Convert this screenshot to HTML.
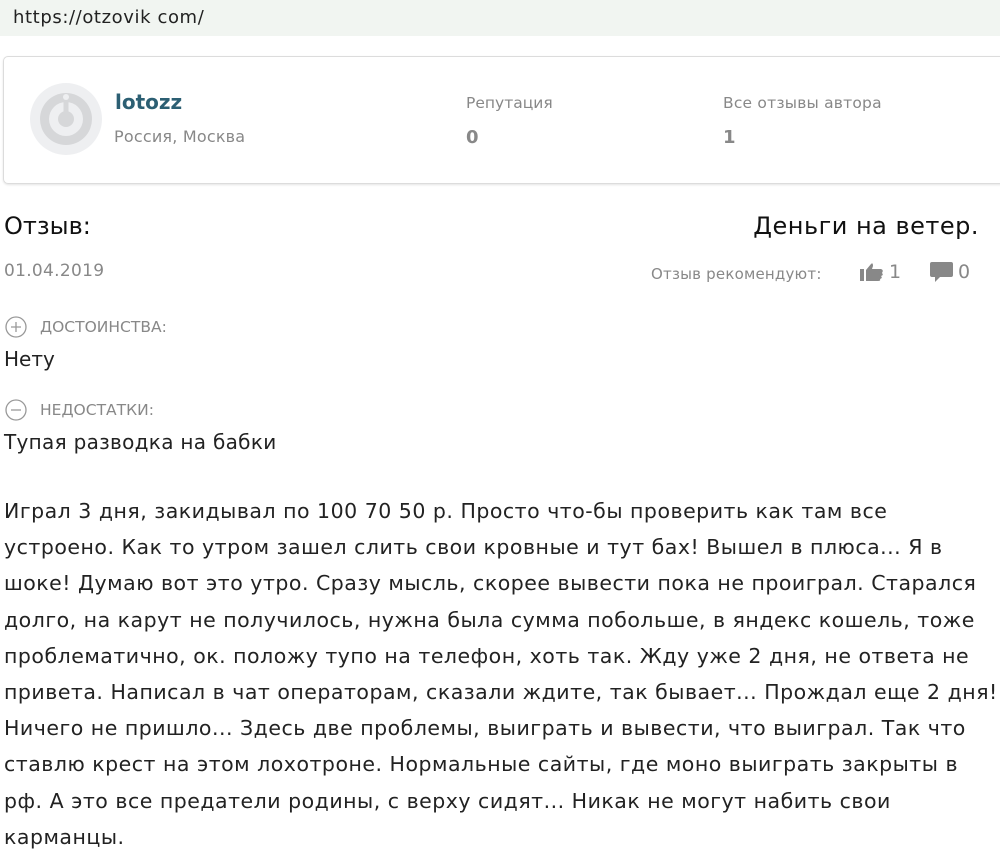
<!DOCTYPE html>
<html><head><meta charset="utf-8"><style>
body{margin:0;width:1000px;height:844px;overflow:hidden;background:#fff;font-family:"DejaVu Sans","Liberation Sans",sans-serif;color:#222;position:relative}
.a{position:absolute;white-space:nowrap}
</style></head><body>
<div class="a" style="left:0;top:0;width:1000px;height:36px;background:#f1f5f1"></div>
<div class="a" style="left:13px;top:7px;font-size:18px;letter-spacing:0.6px;color:#222">https://otzovik com/</div>
<div class="a" style="left:3px;top:56px;width:1010px;height:126px;border:1px solid #dcdcdc;border-radius:5px;box-shadow:0 1px 2px #e4e4e4"></div>
<svg class="a" style="left:30px;top:83px" width="72" height="72"><circle cx="36" cy="36" r="36" fill="#eeeff1"/><circle cx="36" cy="36" r="26" fill="#d6d7d9"/><circle cx="36" cy="36" r="17" fill="#eeeff1"/><circle cx="36" cy="36" r="8" fill="#d6d7d9"/><rect x="33.5" y="14" width="5" height="22" fill="#d6d7d9"/><circle cx="36" cy="14" r="3" fill="#eeeff1"/></svg>
<div class="a" style="left:115px;top:90px;font-size:20px;font-weight:bold;color:#2c5f73">lotozz</div>
<div class="a" style="left:114px;top:127px;font-size:16px;letter-spacing:0.2px;color:#888">Россия, Москва</div>
<div class="a" style="left:466px;top:94px;font-size:15.5px;color:#888">Репутация</div>
<div class="a" style="left:466px;top:127px;font-size:18px;font-weight:bold;color:#888">0</div>
<div class="a" style="left:723px;top:94px;font-size:15.5px;letter-spacing:0.2px;color:#888">Все отзывы автора</div>
<div class="a" style="left:723px;top:127px;font-size:18px;font-weight:bold;color:#888">1</div>
<div class="a" style="left:4px;top:212px;font-size:24px;color:#111">Отзыв:</div>
<div class="a" style="right:21px;top:212px;font-size:24px;letter-spacing:0.5px;color:#111">Деньги на ветер.</div>
<div class="a" style="left:4px;top:261px;font-size:17px;letter-spacing:0.3px;color:#888">01.04.2019</div>
<div class="a" style="left:651px;top:265px;font-size:15px;letter-spacing:0.2px;color:#888">Отзыв рекомендуют:</div>
<svg class="a" style="left:859px;top:262px" width="26" height="20"><rect x="1" y="7" width="4" height="12" fill="#888"/><path d="M7 8 L12 2 Q14 0 14 4 L13 7 H22 Q25 8 23 11 Q25 13 22 14 Q24 16 21 17 Q22 19 19 19 H7Z" fill="#888"/></svg>
<div class="a" style="left:889px;top:261px;font-size:19px;color:#888">1</div>
<svg class="a" style="left:929px;top:261px" width="26" height="22"><rect x="1" y="1" width="23" height="15" rx="2" fill="#888"/><path d="M6 15 L6 21 L12 15Z" fill="#888"/></svg>
<div class="a" style="left:958px;top:261px;font-size:19px;color:#888">0</div>
<svg class="a" style="left:4px;top:315px" width="24" height="24"><circle cx="12" cy="12" r="10" fill="none" stroke="#999" stroke-width="1.3"/><path d="M7 12H17M12 7V17" stroke="#999" stroke-width="1.3"/></svg>
<div class="a" style="left:40px;top:318px;font-size:15.5px;color:#888">ДОСТОИНСТВА:</div>
<div class="a" style="left:4px;top:347px;font-size:20px;color:#222">Нету</div>
<svg class="a" style="left:4px;top:398px" width="24" height="24"><circle cx="12" cy="12" r="10" fill="none" stroke="#999" stroke-width="1.3"/><path d="M7 12H17" stroke="#999" stroke-width="1.3"/></svg>
<div class="a" style="left:40px;top:401px;font-size:15.5px;color:#888">НЕДОСТАТКИ:</div>
<div class="a" style="left:4px;top:430px;font-size:20px;letter-spacing:0.3px;color:#222">Тупая разводка на бабки</div>
<div class="a" style="left:4px;top:493px;font-size:20.5px;letter-spacing:0.5px;line-height:36.2px;color:#222">Играл 3 дня, закидывал по 100 70 50 р. Просто что-бы проверить как там все<br>устроено. Как то утром зашел слить свои кровные и тут бах! Вышел в плюса... Я в<br>шоке! Думаю вот это утро. Сразу мысль, скорее вывести пока не проиграл. Старался<br>долго, на карут не получилось, нужна была сумма побольше, в яндекс кошель, тоже<br>проблематично, ок. положу тупо на телефон, хоть так. Жду уже 2 дня, не ответа не<br>привета. Написал в чат операторам, сказали ждите, так бывает... Прождал еще 2 дня!<br>Ничего не пришло... Здесь две проблемы, выиграть и вывести, что выиграл. Так что<br>ставлю крест на этом лохотроне. Нормальные сайты, где моно выиграть закрыты в<br>рф. А это все предатели родины, с верху сидят... Никак не могут набить свои<br>карманцы.</div>
</body></html>
